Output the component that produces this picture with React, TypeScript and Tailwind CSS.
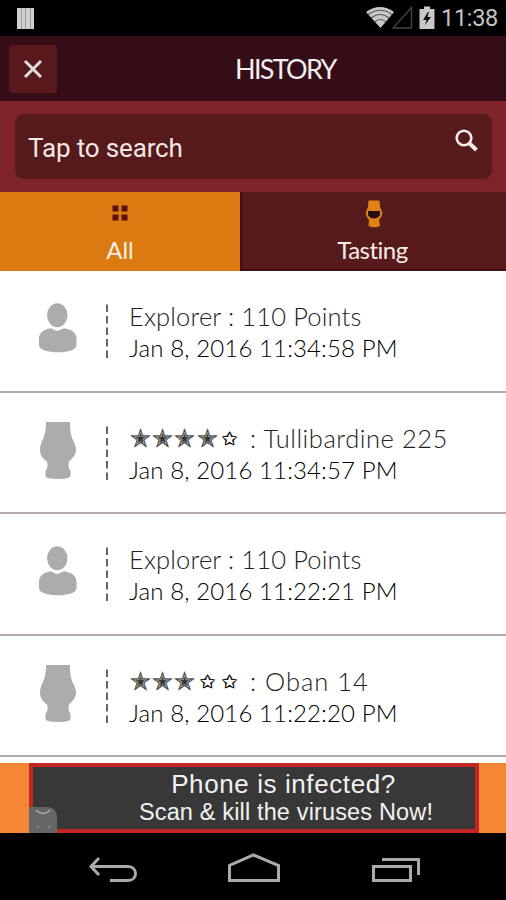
import React from 'react';

interface Entry {
  icon: 'user' | 'glass';
  title: string;
  date: string;
  rating?: number;
  titleClass: string;
}

const entries: Entry[] = [
  { icon: 'user', title: 'Explorer : 110 Points', date: 'Jan 8, 2016 11:34:58 PM', titleClass: 'tracking-[0.15px]' },
  { icon: 'glass', title: ': Tullibardine 225', date: 'Jan 8, 2016 11:34:57 PM', rating: 4, titleClass: 'tracking-[0.55px]' },
  { icon: 'user', title: 'Explorer : 110 Points', date: 'Jan 8, 2016 11:22:21 PM', titleClass: 'tracking-[0.15px]' },
  { icon: 'glass', title: ': Oban 14', date: 'Jan 8, 2016 11:22:20 PM', rating: 3, titleClass: 'tracking-[1px]' },
];

const UserIcon: React.FC = () => (
  <svg width="40" height="50" viewBox="0 0 40 50" fill="#acacac">
    <ellipse cx="19.3" cy="12.2" rx="10.2" ry="12" />
    <path d="M1 42V36C1 30 6 26 13 25.3L18 27.8H20L26 25.3C33 26 38.5 30 38.5 36V42C38.5 47 30 49.3 20 49.3S1 47 1 42Z" />
  </svg>
);

const GlassIcon: React.FC = () => (
  <svg width="38" height="58" viewBox="0 0 38 58" fill="#acacac">
    <path d="M7 0H31C31 9 32 14 34 18C36 22 37 25 37 28C37 33 33 37 30 39.5C29 43 29.5 46 31.5 49V54Q31.5 57 19 57T6.5 54V49C9 46 9 43 8 39.5C4 37 1 33 1 28C1 24 2 21 4 17C6 12 7 7 7 0Z" />
  </svg>
);

// Five stars, the first `value` of them filled
const Stars: React.FC<{ value: number }> = ({ value }) => (
  <span className="mt-[2px] flex h-[30px] w-[121px] items-center font-['DejaVu_Sans'] text-black">
    {[0, 1, 2, 3, 4].map((n) =>
      n < value ? (
        <span key={n} className="w-[22.4px] text-center text-[25px] leading-[30px] text-[#333] [-webkit-text-stroke:0.3px_#444]">✭</span>
      ) : (
        <span key={n} className="w-[22.4px] text-center text-[18px] leading-[30px] [-webkit-text-stroke:0.4px_black]">✩</span>
      )
    )}
  </span>
);

const StatusBar: React.FC = () => (
  <div className="flex h-9 items-center bg-black pr-[8px] pl-[17px] text-[#c4c4c4]">
    <div className="flex h-[21px] w-[17px] gap-px bg-[#999]">
      <i className="flex-1 bg-[#cfcfcf]" />
      <i className="flex-1 bg-[#cfcfcf]" />
      <i className="flex-1 bg-[#cfcfcf]" />
      <i className="flex-1 bg-[#cfcfcf]" />
    </div>
    <svg className="ml-auto" width="70" height="24" viewBox="0 0 70 24" fill="none">
      <path d="M0 6Q14 -4 28 6L14.5 22Z" fill="#c8c8c8" />
      <path d="M2 8.500Q14.500 0 26 8.500M5 12Q14.500 5 23 12M8.500 16Q14.500 11 20 16" stroke="#555" strokeWidth="1.200" />
      <path d="M45.500 1.500V22H27Z" stroke="#444" strokeWidth="1.400" />
      <path d="M53.500 3H58V0.500H64V3H68.500V23H53.500Z" fill="#c8c8c8" />
      <path d="M62 6L57 14H60.500L59 19L65 11H61.500L63 6Z" fill="#111" />
    </svg>
    <span className="ml-[5px] pt-[2px] font-['Roboto'] text-[23.5px] tracking-[-0.3px]">11:38</span>
  </div>
);

const Header: React.FC = () => (
  <header className="flex h-[65px] items-center bg-[#340d17] pl-[9px]">
    <button className="flex h-[48px] w-[48px] items-center justify-center rounded-[4px] bg-[#59191c]">
      <svg width="20" height="20" viewBox="0 0 20 20" stroke="#ddd" strokeWidth="3">
        <path d="M2 2L18 18M18 2L2 18" />
      </svg>
    </button>
    <h1 className="ml-[178px] pt-[2px] text-[27px] tracking-[-1.7px] text-[#f3eeee]">HISTORY</h1>
  </header>
);

const SearchBar: React.FC = () => (
  <div className="h-[91px] bg-[#7e2429] px-[15px] pt-[13px]">
    <div className="mr-[-1px] flex h-[65px] justify-between rounded-[9px] bg-[#56191c] pr-[14px] pl-[13px]">
      <span className="pt-[2px] font-['Roboto'] text-[26px] leading-[64px] tracking-[-0.15px] text-[#f1e8e4]">Tap to search</span>
      <svg className="mt-[14px]" width="24" height="24" viewBox="0 0 24 24" fill="none" stroke="#f4eee9">
        <circle cx="10" cy="10" r="7.3" strokeWidth="2.6" />
        <path d="M15 15L22.5 22" strokeWidth="4" />
      </svg>
    </div>
  </div>
);

const Tabs: React.FC = () => (
  <nav className="flex h-[79px] text-[24px] leading-[30px] text-[#f8eee4]">
    <div className="flex w-[240px] flex-col items-center bg-[#db7a10] pt-[13px]">
      <svg width="16" height="16" viewBox="0 0 16 16" fill="#5a1014">
        <path d="M0.5 0.5H6.5V6.5H0.5ZM9.5 0.5H15.5V6.5H9.5ZM0.5 9.5H6.5V15.5H0.5ZM9.5 9.5H15.5V15.5H9.5Z" />
      </svg>
      <span className="mt-[14px]">All</span>
    </div>
    <div className="flex flex-1 flex-col items-center border-b-2 border-l-2 border-[#430d12] bg-[#56191c] pt-[8px] pr-[3px]">
      <svg width="18" height="28" viewBox="0 0 18 28" className="ml-[2px]">
        <path d="M3.5 0.5H14.5L15 7Q16 9 17.5 13.5Q16 18 14 20L15 26Q9 28.5 3.5 26L4 20Q2 18 0.5 13.5Q2 9 3 7Z" fill="#df8414" />
        <path d="M3 11H15V15Q13 18.5 9 18.5T3 15Z" fill="#25101a" />
      </svg>
      <span className="mt-[7px] tracking-[-0.5px]">Tasting</span>
    </div>
  </nav>
);

const HistoryRow: React.FC<{ entry: Entry }> = ({ entry }) => (
  <li className="flex h-[121.5px] border-b-2 border-[#b5a8aa] bg-white">
    <div className="flex w-[105px] justify-center pt-[29px] pl-[10px]">
      {entry.icon === 'user' ? <div className="mt-[3px]"><UserIcon /></div> : <GlassIcon />}
    </div>
    <svg className="mt-[33px]" width="4" height="56" viewBox="0 0 4 56">
      <path d="M2 0.5V55" stroke="#666" strokeWidth="2" strokeDasharray="7.5 4" />
    </svg>
    <div className="ml-[20px] pt-[29px] whitespace-nowrap text-[#222]">
      <div className="flex h-[32px] items-center text-[25.5px] leading-[32px] font-light">
        {entry.rating !== undefined && <Stars value={entry.rating} />}
        <span className={entry.titleClass}>{entry.title}</span>
      </div>
      <div className="text-[24px] leading-[32px] font-light tracking-[0.12px] text-black">{entry.date}</div>
    </div>
  </li>
);

const AdBanner: React.FC = () => (
  <div className="relative h-[70px] bg-[#f58634] pr-[27px] pl-[29px]">
    <div className="h-[70px] border-4 border-[#c22522] bg-[#383838] pl-[60px] text-center font-['Liberation_Sans'] whitespace-nowrap text-[#f2f2f2]">
      <div className="pt-[1px] pr-[1px] text-[26px] leading-[33px] tracking-[0.6px]">Phone is infected?</div>
      <div className="pl-[4px] text-[23.5px] leading-[22px] tracking-[0.15px]">Scan &amp; kill the viruses Now!</div>
    </div>
    <svg className="absolute bottom-0 left-[29px]" width="28" height="26" viewBox="0 0 28 26">
      <path d="M0 0H19Q28 1 28 10V26H0Z" fill="#656565" />
      <path d="M7 3Q14 10 21 3" fill="none" stroke="#aaa" strokeWidth="1.5" />
      <path d="M8 20H10M19 20H21" stroke="#888" strokeWidth="2" />
    </svg>
  </div>
);

const NavBar: React.FC = () => (
  <div className="flex h-[67px] bg-black pt-[19px] pl-[89px]">
    <svg width="332" height="34" viewBox="0 0 332 34" fill="none" stroke="#aaa" strokeWidth="3">
      <path d="M10 6L2 14.5L10 23M2 14.5H39C49 14.5 49 28.5 39 28.5H21" />
      <path d="M140.5 28.5V13.5L164.5 3L189.5 13.5V28.5Z" />
      <path d="M284.5 14.5H321.5V28.5H284.5ZM293 7.5H329.5V23" />
    </svg>
  </div>
);

const App: React.FC = () => {
  return (
    <div className="flex h-[900px] w-[506px] flex-col overflow-hidden bg-white font-['Lato',sans-serif]">
      <StatusBar />
      <Header />
      <SearchBar />
      <Tabs />

      {/* History list */}
      <ul className="h-[492px] overflow-hidden">
        {entries.map((entry) => (
          <HistoryRow key={entry.date} entry={entry} />
        ))}
      </ul>

      <AdBanner />
      <NavBar />
    </div>
  );
};

export default App;
